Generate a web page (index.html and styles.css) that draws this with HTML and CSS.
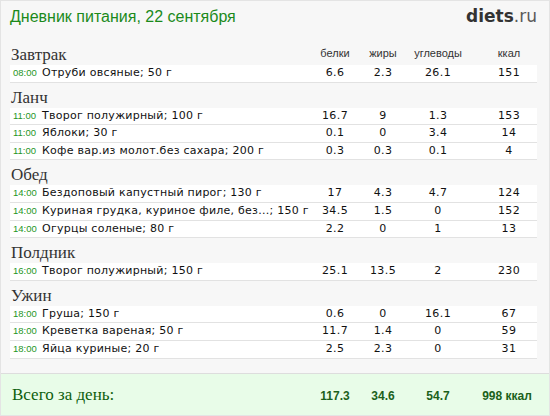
FILE: index.html
```html
<!DOCTYPE html>
<html lang="ru">
<head>
<meta charset="utf-8">
<title>Дневник питания</title>
<link rel="stylesheet" href="styles.css">
</head>
<body>
<div class="page">
  <div class="content">
    <div class="top">
      <h1 class="title">Дневник питания, 22 сентября</h1>
      <div class="logo"><b>diets</b>.ru</div>
    </div>

    <div class="meal first">
      <div class="meal-name">Завтрак</div>
      <div class="lbl">белки</div>
      <div class="lbl">жиры</div>
      <div class="lbl">углеводы</div>
      <div class="lbl last">ккал</div>
    </div>
    <div class="row"><div class="name"><span class="time">08:00</span>Отруби овсяные; 50 г</div><div class="num">6.6</div><div class="num">2.3</div><div class="num">26.1</div><div class="num last">151</div></div>

    <div class="meal"><div class="meal-name">Ланч</div></div>
    <div class="row"><div class="name"><span class="time">11:00</span>Творог полужирный; 100 г</div><div class="num">16.7</div><div class="num">9</div><div class="num">1.3</div><div class="num last">153</div></div>
    <div class="row"><div class="name"><span class="time">11:00</span>Яблоки; 30 г</div><div class="num">0.1</div><div class="num">0</div><div class="num">3.4</div><div class="num last">14</div></div>
    <div class="row"><div class="name"><span class="time">11:00</span>Кофе вар.из молот.без сахара; 200 г</div><div class="num">0.3</div><div class="num">0.3</div><div class="num">0.1</div><div class="num last">4</div></div>

    <div class="meal"><div class="meal-name">Обед</div></div>
    <div class="row"><div class="name"><span class="time">14:00</span>Бездоповый капустный пирог; 130 г</div><div class="num">17</div><div class="num">4.3</div><div class="num">4.7</div><div class="num last">124</div></div>
    <div class="row"><div class="name"><span class="time">14:00</span>Куриная грудка, куриное филе, без...; 150 г</div><div class="num">34.5</div><div class="num">1.5</div><div class="num">0</div><div class="num last">152</div></div>
    <div class="row"><div class="name"><span class="time">14:00</span>Огурцы соленые; 80 г</div><div class="num">2.2</div><div class="num">0</div><div class="num">1</div><div class="num last">13</div></div>

    <div class="meal"><div class="meal-name">Полдник</div></div>
    <div class="row"><div class="name"><span class="time">16:00</span>Творог полужирный; 150 г</div><div class="num">25.1</div><div class="num">13.5</div><div class="num">2</div><div class="num last">230</div></div>

    <div class="meal"><div class="meal-name">Ужин</div></div>
    <div class="row"><div class="name"><span class="time">18:00</span>Груша; 150 г</div><div class="num">0.6</div><div class="num">0</div><div class="num">16.1</div><div class="num last">67</div></div>
    <div class="row"><div class="name"><span class="time">18:00</span>Креветка вареная; 50 г</div><div class="num">11.7</div><div class="num">1.4</div><div class="num">0</div><div class="num last">59</div></div>
    <div class="row"><div class="name"><span class="time">18:00</span>Яйца куриные; 20 г</div><div class="num">2.5</div><div class="num">2.3</div><div class="num">0</div><div class="num last">31</div></div>
  </div>

  <div class="total">
    <div class="total-grid">
      <div class="total-label">Всего за день:</div>
      <div class="tnum">117.3</div>
      <div class="tnum">34.6</div>
      <div class="tnum">54.7</div>
      <div class="tnum last">998 ккал</div>
    </div>
  </div>
</div>
</body>
</html>
```

FILE: styles.css
```css
html, body {
  margin: 0;
  padding: 0;
}

body {
  background: #f7f7f7;
}

.page {
  width: 550px;
  height: 416px;
  box-sizing: border-box;
  border: 1px solid #e4e4e4;
  background: #f7f7f7;
  display: flex;
  flex-direction: column;
}

.content {
  padding: 0 12px 0 9px;
}

.top {
  display: flex;
  justify-content: space-between;
  align-items: baseline;
  height: 39px;
  padding-top: 5px;
  box-sizing: border-box;
}

.title {
  margin: 0;
  font-family: "Liberation Sans", Arial, sans-serif;
  font-weight: normal;
  font-size: 16px;
  line-height: 20px;
  color: #1b8a1b;
}

.logo {
  font-family: "DejaVu Sans", Verdana, sans-serif;
  font-size: 17px;
  line-height: 20px;
  color: #5a5a5a;
}

.logo b {
  color: #333333;
  font-weight: bold;
}

.meal,
.row,
.total-grid {
  display: grid;
  grid-template-columns: 1fr 48px 48px 62px 68px;
  align-items: baseline;
}

.meal {
  height: 25px;
  padding-top: 5px;
  box-sizing: border-box;
}

.meal-name {
  font-family: "Liberation Serif", "Times New Roman", serif;
  font-size: 17px;
  line-height: 20px;
  color: #333333;
  padding-left: 1px;
}

.lbl {
  font-family: "Liberation Sans", Arial, sans-serif;
  font-size: 11px;
  color: #333333;
  text-align: center;
  position: relative;
  top: -3px;
}

.last {
  padding-left: 12px;
}

.row {
  height: 17.6px;
  box-sizing: border-box;
  background: #ffffff;
  border-bottom: 1px solid #e2e2e2;
  font-family: "DejaVu Sans", Verdana, sans-serif;
  font-size: 11px;
  line-height: 16.6px;
  color: #111111;
}

.name {
  white-space: nowrap;
  letter-spacing: 0.25px;
  padding-left: 3px;
}

.time {
  display: inline-block;
  width: 29px;
  font-family: "Liberation Sans", Arial, sans-serif;
  font-size: 9.5px;
  letter-spacing: 0;
  color: #1f961f;
}

.num {
  text-align: center;
  letter-spacing: 0.4px;
}

.total {
  margin-top: auto;
  height: 42px;
  box-sizing: border-box;
  border-top: 1px solid #dddddd;
  background: #e8fce8;
  padding: 11px 12px 0 9px;
}

.total-label {
  font-family: "Liberation Serif", "Times New Roman", serif;
  font-size: 17px;
  line-height: 20px;
  color: #0d5e0d;
  padding-left: 2px;
}

.tnum {
  font-family: "Liberation Sans", Arial, sans-serif;
  font-weight: bold;
  font-size: 12px;
  color: #1b611b;
  text-align: center;
  white-space: nowrap;
}

.tnum.last {
  padding-left: 8px;
}
```
